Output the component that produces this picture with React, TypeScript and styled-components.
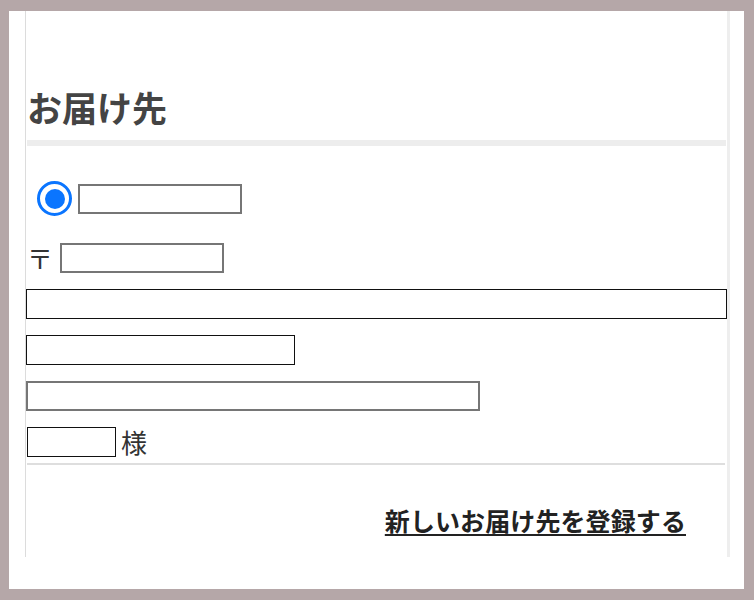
import styled, { createGlobalStyle } from 'styled-components';

const GlobalStyle = createGlobalStyle`
	html, body {
		margin: 0;
		padding: 0;
		background: #b5a7a8;
	}
	body {
		font-family: 'Noto Sans CJK JP', 'Noto Sans', sans-serif;
		color: #333;
	}
`;

type Tone = 'gray' | 'dark';

const addressFields: { width: string; tone: Tone }[] = [
	{ width: '701px', tone: 'dark' },
	{ width: '269px', tone: 'dark' },
	{ width: '454px', tone: 'gray' },
];

const App = () => {
	return (
		<>
			<GlobalStyle />
			<Card>
				<Panel>
					<Title>お届け先</Title>
					<TitleBar />
					<Section>
						<RadioRow>
							<Radio aria-checked='true' role='radio' />
							<Field $width='164px' $tone='gray' type='text' />
						</RadioRow>
						<Fields>
							<LabelRow>
								<Mark>〒</Mark>
								<Field $width='164px' $tone='gray' type='text' />
							</LabelRow>
							{addressFields.map((f, i) => (
								<Field key={i} $width={f.width} $tone={f.tone} type='text' />
							))}
							<LabelRow $gap='5px'>
								<Field $width='89px' $tone='dark' type='text' />
								<Mark>様</Mark>
							</LabelRow>
						</Fields>
						<Divider />
						<Footer>
							<NewLink href='#'>新しいお届け先を登録する</NewLink>
						</Footer>
					</Section>
				</Panel>
			</Card>
		</>
	);
};

export default App;

// Styled Components
const Card = styled.div`
	margin: 11px 10px 0 9px;
	height: 578px;
	background: #fff;
	padding: 0 14px 0 16px;
	box-sizing: border-box;
`;

const Panel = styled.div`
	height: 546px;
	border-left: 1px solid #dcdcdc;
	border-right: 3px solid #eeeeee;
	padding-top: 78px;
	box-sizing: border-box;
`;

const Title = styled.h2`
	margin: 0;
	padding-left: 1px;
	font-size: 35px;
	line-height: 35px;
	font-weight: 700;
	color: #444;
`;

const TitleBar = styled.div`
	margin: 16px 1px 0 1px;
	height: 6px;
	background: #ededed;
`;

const Section = styled.div`
	padding-top: 35px;
`;

const RadioRow = styled.div`
	display: flex;
	align-items: center;
	gap: 6px;
	height: 35px;
	padding-left: 11px;
`;

const Radio = styled.span`
	width: 35px;
	height: 35px;
	box-sizing: border-box;
	border: 3px solid #0a75ff;
	border-radius: 50%;
	display: flex;
	align-items: center;
	justify-content: center;
	background: #fff;

	&::after {
		content: '';
		width: 20px;
		height: 20px;
		border-radius: 50%;
		background: #0a75ff;
	}
`;

const Fields = styled.div`
	display: flex;
	flex-direction: column;
	align-items: flex-start;
	gap: 16px;
	margin-top: 27px;
`;

const LabelRow = styled.div<{ $gap?: string }>`
	display: flex;
	align-items: center;
	gap: ${(p) => p.$gap || '7px'};
	padding-left: 1px;
`;

const Mark = styled.span`
	font-size: 26px;
	line-height: 30px;
	color: #333;
`;

const Field = styled.input<{ $width: string; $tone: Tone }>`
	width: ${(p) => p.$width};
	height: 30px;
	box-sizing: border-box;
	margin: 0;
	padding: 0 4px;
	background: #fff;
	outline: none;
	border-radius: 0;
	font: inherit;
	${(p) =>
		p.$tone === 'gray'
			? 'border: 2px solid #767676;'
			: 'border: 1px solid #111;'};
`;

const Divider = styled.div`
	margin: 6px 2px 0 1px;
	height: 2px;
	background: #dedede;
`;

const Footer = styled.div`
	display: flex;
	justify-content: flex-end;
	padding: 43px 41px 24px 0;
`;

const NewLink = styled.a`
	font-size: 25px;
	line-height: 25px;
	font-weight: 700;
	color: #222;
	letter-spacing: 0.1px;
	text-decoration: underline;
	text-decoration-thickness: 2px;
	text-underline-offset: 3px;
`;
